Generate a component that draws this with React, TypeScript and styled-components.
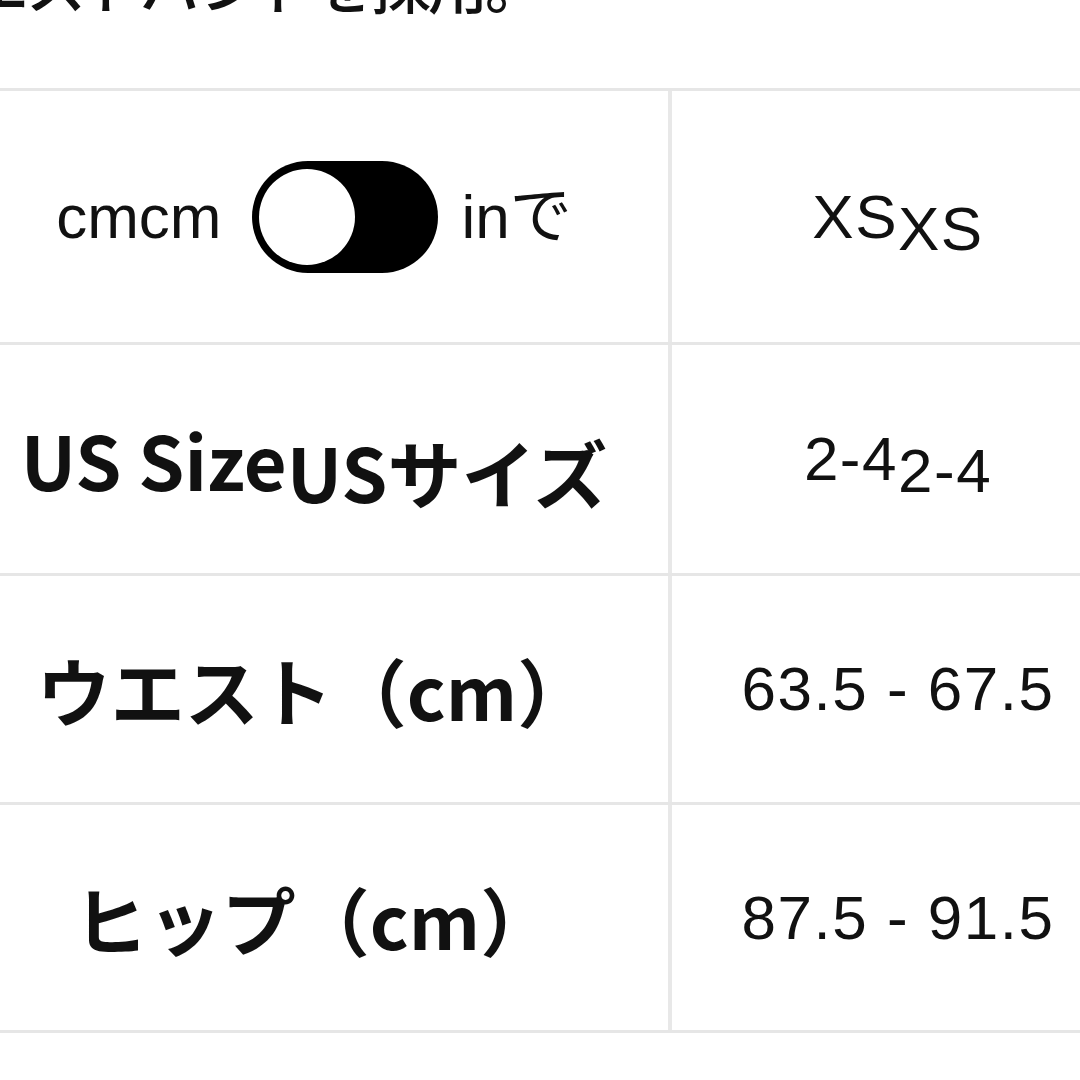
import { createGlobalStyle, styled } from 'styled-components';

const GlobalStyle = createGlobalStyle`
  html, body {
    margin: 0;
    padding: 0;
    background: #ffffff;
  }
  body {
    font-family: 'Noto Sans CJK JP', 'Noto Sans', sans-serif;
    color: #111111;
  }
`;

const Page = styled.div`
  width: 1080px;
  height: 1080px;
  overflow: hidden;
  background: #ffffff;
`;

const TopNote = styled.div`
  height: 88px;
  overflow: hidden;
`;

const TopNoteLine = styled.div`
  margin-top: -47px;
  margin-left: -88px;
  font-size: 60px;
  font-weight: 500;
  line-height: 1;
  white-space: nowrap;
  letter-spacing: -3px;
  color: #111111;
`;

const Table = styled.div`
  border-top: 3px solid #e6e6e6;
`;

const Row = styled.div<{ $height: number }>`
  display: grid;
  grid-template-columns: 668px 1fr;
  height: ${(p) => p.$height}px;
  border-bottom: 3px solid #e6e6e6;
`;

const LabelCell = styled.div`
  display: flex;
  align-items: center;
  justify-content: center;
  padding-right: 40px;
`;

const ValueCell = styled.div`
  display: flex;
  align-items: center;
  justify-content: center;
  padding-left: 44px;
  border-left: 4px solid #e8e8e8;
`;

const Label = styled.span`
  font-size: 74px;
  font-weight: 700;
  line-height: 1;
  white-space: nowrap;
`;

const Lowered = styled.span`
  position: relative;
  top: 12px;
`;

const Value = styled.span`
  font-family: 'Liberation Sans', 'Noto Sans CJK JP', sans-serif;
  font-size: 62px;
  font-weight: 400;
  line-height: 1;
  letter-spacing: 1.5px;
  white-space: nowrap;
`;

const UnitSwitch = styled.div`
  display: flex;
  align-items: center;
  font-family: 'Liberation Sans', 'Noto Sans CJK JP', sans-serif;
  font-size: 62px;
  line-height: 1;
`;

const Toggle = styled.div`
  width: 186px;
  height: 112px;
  margin: 0 24px 0 30px;
  border-radius: 56px;
  background: #000000;
  display: flex;
  align-items: center;
  padding-left: 7px;
  box-sizing: border-box;
`;

const Knob = styled.div`
  width: 96px;
  height: 96px;
  border-radius: 50%;
  background: #ffffff;
`;

const rows = [
  { label: null, value: 'XS', height: 251 },
  { label: 'US Size', sub: 'USサイズ', value: '2-4', height: 228 },
  { label: 'ウエスト（cm）', value: '63.5 - 67.5', height: 226 },
  { label: 'ヒップ（cm）', value: '87.5 - 91.5', height: 225 },
];

function App() {
  return (
    <Page>
      <GlobalStyle />
      <TopNote>
        <TopNoteLine>ウエストバンドを採用。</TopNoteLine>
      </TopNote>
      <Table>
        {rows.map((row, i) => (
          <Row key={i} $height={row.height}>
            <LabelCell>
              {row.label === null ? (
                <UnitSwitch>
                  <span>cmcm</span>
                  <Toggle>
                    <Knob />
                  </Toggle>
                  <span>inで</span>
                </UnitSwitch>
              ) : (
                <Label>
                  {row.label}
                  {row.sub && <Lowered>{row.sub}</Lowered>}
                </Label>
              )}
            </LabelCell>
            <ValueCell>
              <Value>
                {row.value}
                {i < 2 && <Lowered>{row.value}</Lowered>}
              </Value>
            </ValueCell>
          </Row>
        ))}
      </Table>
    </Page>
  );
}

export default App;
